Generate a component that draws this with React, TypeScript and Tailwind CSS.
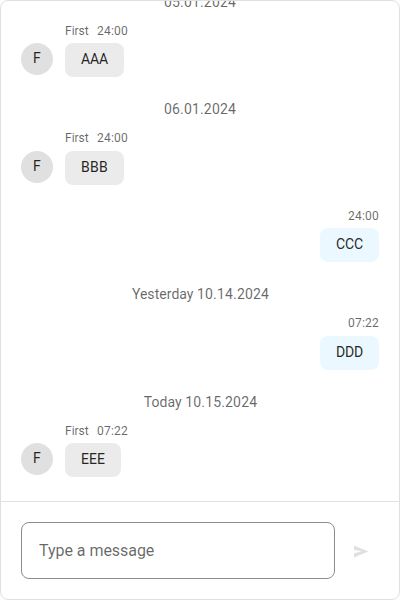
import React from "react";

type Item =
  | { kind: "date"; label?: string; text: string; box: string }
  | { kind: "in" | "out"; text: string; time: string; box: string; meta: string; bubble: string };

const items: Item[] = [
  { kind: "date", text: "05.01.2024", box: "-mt-[9px]" },
  { kind: "in", text: "AAA", time: "24:00", box: "mt-[11px]", meta: "h-5", bubble: "w-[59px] tracking-[-0.13px]" },
  { kind: "date", text: "06.01.2024", box: "mt-[22px]" },
  { kind: "in", text: "BBB", time: "24:00", box: "mt-[11px]", meta: "h-[21px]", bubble: "w-[59px] tracking-[0.28px]" },
  { kind: "out", text: "CCC", time: "24:00", box: "mt-[23px]", meta: "h-5", bubble: "w-[59px] tracking-[-0.1px]" },
  { kind: "date", label: "Yesterday", text: "10.14.2024", box: "mt-[22px] pl-px" },
  { kind: "out", text: "DDD", time: "07:22", box: "mt-[11px]", meta: "h-[21px]", bubble: "w-[59px] tracking-[-0.19px]" },
  { kind: "date", label: "Today", text: "10.15.2024", box: "mt-[22px] pl-px" },
  { kind: "in", text: "EEE", time: "07:22", box: "mt-[11px]", meta: "h-5", bubble: "w-14" },
];

function Row({ item }: { item: Item }) {
  if (item.kind === "date") {
    return (
      <div className={`h-5 shrink-0 text-center text-sm leading-5 text-black/60 ${item.box}`}>
        {item.label && <span className="tracking-[0.04px]">{item.label} </span>}
        <span className="tracking-[0.17px]">{item.text}</span>
      </div>
    );
  }
  const bubble = `h-[34px] rounded-lg pl-4 text-sm leading-[33px] text-black/87 ${item.bubble}`;
  if (item.kind === "out") {
    return (
      <div className={`flex shrink-0 flex-col items-end ${item.box}`}>
        <div className={`text-xs leading-4 tracking-[0.22px] text-black/60 ${item.meta}`}>{item.time}</div>
        <div className={`bg-[#ebf8ff] ${bubble}`}>{item.text}</div>
      </div>
    );
  }
  return (
    <div className={`flex shrink-0 items-start gap-3 ${item.box}`}>
      <div className="flex flex-col">
        <div className={item.meta} />
        <div className="h-8 w-8 rounded-full bg-[#e0e0e0] pl-3 text-sm leading-[31px] text-black/87">F</div>
      </div>
      <div className="flex flex-col items-start">
        <div className={`flex gap-2 text-xs leading-4 text-black/60 ${item.meta}`}>
          <span className="w-6">First</span>
          <span className="tracking-[0.22px]">{item.time}</span>
        </div>
        <div className={`bg-[#ebebeb] ${bubble}`}>{item.text}</div>
      </div>
    </div>
  );
}

export default function App() {
  return (
    <div className="flex h-[600px] w-[400px] flex-col overflow-hidden rounded-lg border border-[#e0e0e0] bg-white font-[Roboto,sans-serif]">
      <div className="flex h-[500px] flex-col overflow-hidden px-5">
        {items.map((item) => (
          <Row key={item.text} item={item} />
        ))}
      </div>
      <div className="flex flex-1 items-start border-t border-[#e0e0e0] px-5 pt-5">
        <div className="flex h-[57px] w-[314px] items-center rounded-lg border border-[#8c8c8c] px-[17px] text-base tracking-[-0.04px] text-black/60">
          Type a message
        </div>
        <svg className="mt-[21px] ml-[18px] h-4 w-4" viewBox="0 0 16 16" fill="#e0e0e0">
          <path d="M1 2.5 15.4 8.5 1 14.5V10.3L8.5 8.5 1 6.7Z" />
        </svg>
      </div>
    </div>
  );
}
